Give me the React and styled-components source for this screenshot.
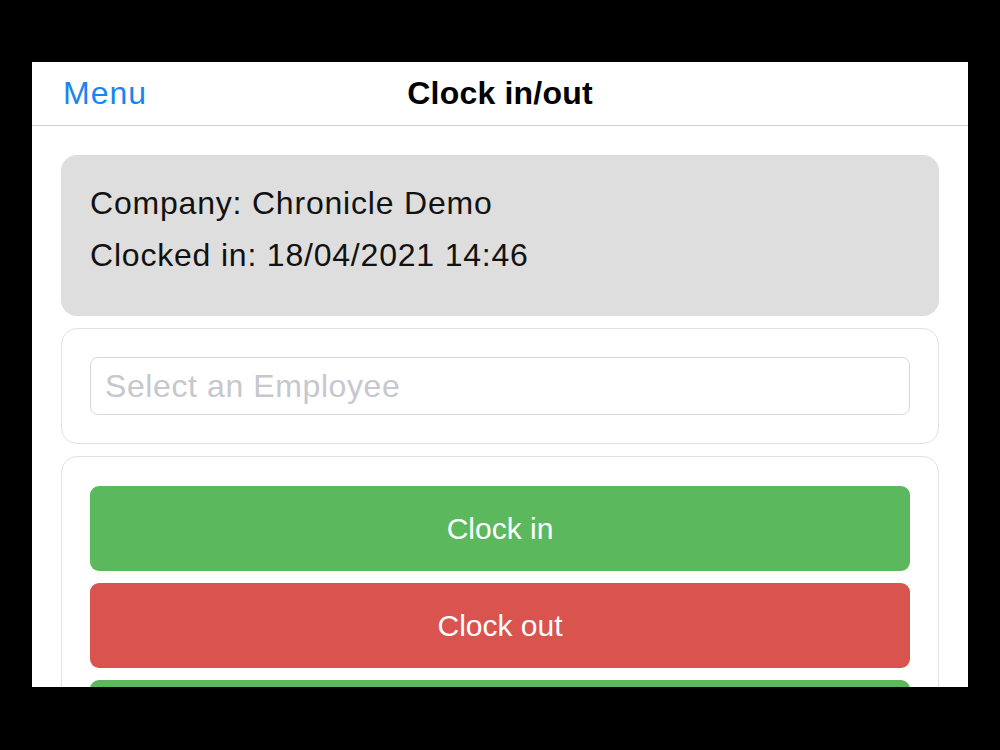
import styled, { createGlobalStyle } from 'styled-components';

const GlobalStyle = createGlobalStyle`
  html, body {
    margin: 0;
    padding: 0;
    background: #000;
    font-family: "Liberation Sans", Arial, sans-serif;
  }
`;

const Frame = styled.div`
  width: 1000px;
  height: 750px;
  background: #000;
  padding: 62px 32px 0;
  box-sizing: border-box;
`;

const Screen = styled.div`
  width: 936px;
  height: 625px;
  background: #fff;
  overflow: hidden;
  display: flex;
  flex-direction: column;
`;

const NavBar = styled.div`
  height: 63px;
  flex-shrink: 0;
  display: grid;
  grid-template-columns: 1fr auto 1fr;
  align-items: center;
  padding: 0 31px;
  border-bottom: 1px solid #d2d2d4;
`;

const NavLink = styled.span`
  color: #1b84f3;
  font-size: 32px;
  letter-spacing: 1px;
  justify-self: start;
`;

const NavTitle = styled.span`
  color: #000;
  font-size: 32px;
  font-weight: bold;
  letter-spacing: 0.2px;
`;

const Content = styled.div`
  padding: 29px 29px 0;
  display: flex;
  flex-direction: column;
  gap: 12px;
`;

const InfoCard = styled.div`
  background: #dedede;
  border-radius: 16px;
  padding: 30px 29px 42px;
`;

const InfoLine = styled.div`
  font-size: 32px;
  line-height: 37px;
  letter-spacing: 0.8px;
  color: #111;

  & + & {
    margin-top: 15px;
  }
`;

const Card = styled.div`
  border: 1px solid #e2e2e4;
  border-radius: 16px;
  padding: ${(p) => p.$pad || '28px'};
  display: flex;
  flex-direction: column;
  gap: 12px;
`;

const Picker = styled.input`
  height: 58px;
  box-sizing: border-box;
  border: 1px solid #d8d8da;
  border-radius: 8px;
  padding: 0 14px;
  font-family: inherit;
  font-size: 32px;
  letter-spacing: 0.6px;
  color: #111;
  outline: none;

  &::placeholder {
    color: #c7c7cd;
  }
`;

const ActionButton = styled.button`
  height: 85px;
  border: none;
  border-radius: 9px;
  background: ${(p) => p.$color};
  color: #fff;
  font-family: inherit;
  font-size: 30px;
  flex-shrink: 0;
`;

export default function App() {
  return (
    <>
      <GlobalStyle />
      <Frame>
        <Screen>
          <NavBar>
            <NavLink>Menu</NavLink>
            <NavTitle>Clock in/out</NavTitle>
            <span />
          </NavBar>
          <Content>
            <InfoCard>
              <InfoLine>Company: Chronicle Demo</InfoLine>
              <InfoLine>Clocked in: 18/04/2021 14:46</InfoLine>
            </InfoCard>
            <Card>
              <Picker placeholder="Select an Employee" readOnly />
            </Card>
            <Card $pad="29px 28px">
              <ActionButton $color="#5cb85c">Clock in</ActionButton>
              <ActionButton $color="#d9534f">Clock out</ActionButton>
              {/* third action sits below the fold */}
              <ActionButton $color="#5cb85c" aria-label="Start break" />
            </Card>
          </Content>
        </Screen>
      </Frame>
    </>
  );
}
